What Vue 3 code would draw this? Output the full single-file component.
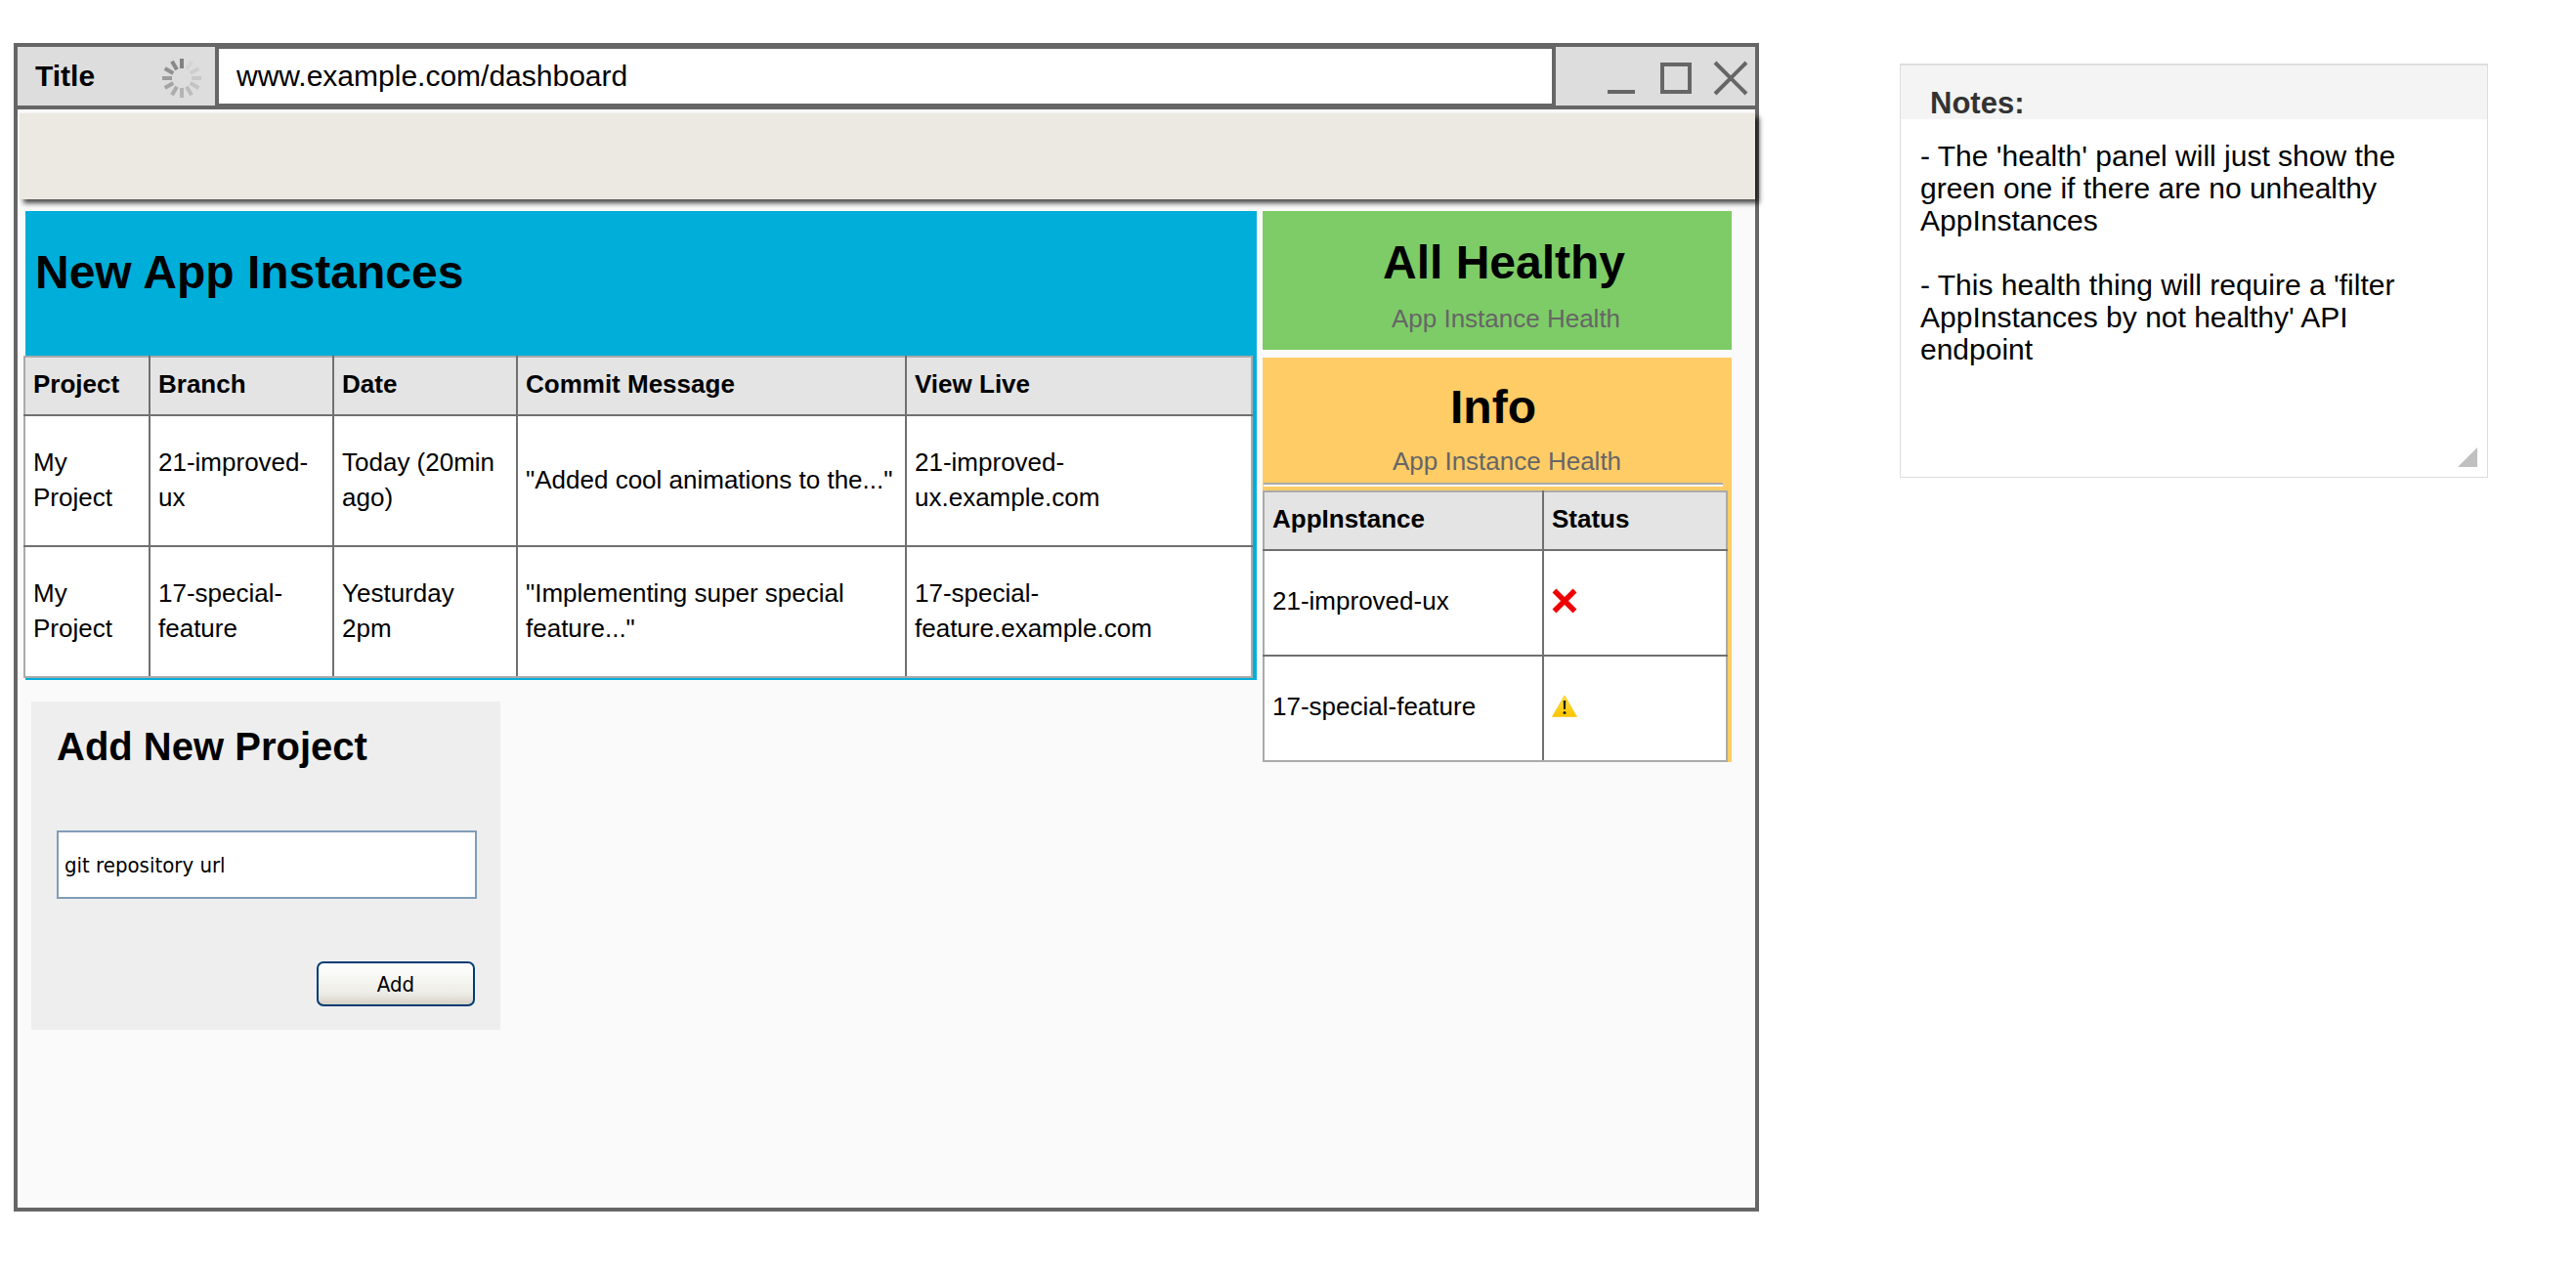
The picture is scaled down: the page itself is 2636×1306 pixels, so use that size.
<script setup>
import { ref } from 'vue'

const address = ref('www.example.com/dashboard')
const repository = ref('git repository url')
const notes = ref(
  "- The 'health' panel will just show the green one if there are no unhealthy AppInstances\n\n- This health thing will require a 'filter AppInstances by not healthy' API endpoint"
)

const builds = [
  { project: 'My Project', branch: '21-improved-ux', date: 'Today (20min ago)', message: '"Added cool animations to the..."', live: '21-improved-ux.example.com' },
  { project: 'My Project', branch: '17-special-feature', date: 'Yesturday 2pm', message: '"Implementing super special feature..."', live: '17-special-feature.example.com' }
]

const health = [
  { name: '21-improved-ux', status: 'error' },
  { name: '17-special-feature', status: 'warning' }
]

const spokes = [0.9, 0.08, 0.14, 0.2, 0.26, 0.32, 0.4, 0.48, 0.56, 0.64, 0.74, 0.84]
</script>

<template>
  <div class="page">
    <main class="window">
      <header class="titlebar">
        <div class="tab">
          <span>Title</span>
          <svg class="spinner" width="40" height="40" viewBox="-20 -20 40 40" aria-hidden="true">
            <rect
              v-for="(o, i) in spokes"
              :key="i"
              x="-2"
              y="-20"
              width="4"
              height="10"
              fill="#777"
              :opacity="o"
              :transform="`rotate(${i * 30})`"
            />
          </svg>
        </div>
        <input v-model="address" class="address" type="text" aria-label="Address" />
        <div class="controls">
          <button type="button" aria-label="Minimize">
            <svg width="36" height="36" viewBox="0 0 36 36"><path d="M4 32h28" /></svg>
          </button>
          <button type="button" aria-label="Maximize">
            <svg width="36" height="36" viewBox="0 0 36 36"><path d="M4 4h28v28H4z" /></svg>
          </button>
          <button type="button" aria-label="Close">
            <svg width="36" height="36" viewBox="0 0 36 36"><path d="M2 2l32 32M34 2L2 34" /></svg>
          </button>
        </div>
      </header>

      <div class="toolbar"></div>

      <div class="content">
        <div class="primary">
          <section class="panel instances">
            <h1>New App Instances</h1>
            <table>
              <colgroup>
                <col class="c-project" />
                <col class="c-branch" />
                <col class="c-date" />
                <col class="c-message" />
                <col />
              </colgroup>
              <thead>
                <tr>
                  <th>Project</th>
                  <th>Branch</th>
                  <th>Date</th>
                  <th>Commit Message</th>
                  <th>View Live</th>
                </tr>
              </thead>
              <tbody>
                <tr v-for="b in builds" :key="b.branch">
                  <td>{{ b.project }}</td>
                  <td>{{ b.branch }}</td>
                  <td>{{ b.date }}</td>
                  <td>{{ b.message }}</td>
                  <td>{{ b.live }}</td>
                </tr>
              </tbody>
            </table>
          </section>

          <form class="add" @submit.prevent>
            <h2><label for="repo">Add New Project</label></h2>
            <input id="repo" v-model="repository" type="text" />
            <button type="submit">Add</button>
          </form>
        </div>

        <aside class="secondary">
          <section class="panel healthy">
            <h1>All Healthy</h1>
            <p>App Instance Health</p>
          </section>

          <section class="panel info">
            <h1>Info</h1>
            <p>App Instance Health</p>
            <hr />
            <table>
              <colgroup>
                <col class="c-instance" />
                <col />
              </colgroup>
              <thead>
                <tr>
                  <th>AppInstance</th>
                  <th>Status</th>
                </tr>
              </thead>
              <tbody>
                <tr v-for="h in health" :key="h.name">
                  <td>{{ h.name }}</td>
                  <td>
                    <svg v-if="h.status === 'error'" width="26" height="26" viewBox="0 0 26 26" role="img" aria-label="Unhealthy">
                      <path d="M2.500 2.500l21 21M23.500 2.500l-21 21" stroke="#ee0000" stroke-width="5.500" />
                    </svg>
                    <svg v-else width="26" height="26" viewBox="0 0 26 26" role="img" aria-label="Warning">
                      <defs>
                        <linearGradient id="amber" x1="0" y1="0" x2="0" y2="1">
                          <stop offset="0" stop-color="#ffdf4a" />
                          <stop offset="1" stop-color="#fcc400" />
                        </linearGradient>
                      </defs>
                      <path d="M13 2L25.500 23.500H.5z" fill="url(#amber)" stroke="#f8cf30" stroke-linejoin="round" />
                      <path d="M11.700 7h2.600l-.4 9h-1.800z" fill="#1c1c10" />
                      <circle cx="13" cy="19.500" r="1.500" fill="#1c1c10" />
                    </svg>
                  </td>
                </tr>
              </tbody>
            </table>
          </section>
        </aside>
      </div>
    </main>

    <section class="notes">
      <label for="notes">Notes:</label>
      <textarea id="notes" v-model="notes" rows="10"></textarea>
      <svg class="grip" width="20" height="20" viewBox="0 0 20 20" aria-hidden="true"><path d="M20 0v20H0z" fill="#c0c0c0" /></svg>
    </section>
  </div>
</template>

<style>
body {
  background: #fff;
}
</style>

<style scoped>
.page {
  display: flex;
  align-items: flex-start;
  gap: 144px;
  padding: 44px 90px 64px 14px;
  font-family: "Liberation Sans", Arial, sans-serif;
  font-size: 26px;
  line-height: 36px;
  color: #000;
}

.page * {
  box-sizing: border-box;
}

h1,
h2,
p {
  margin: 0;
}

h1 {
  font-size: 48px;
  line-height: 56px;
}

button {
  cursor: pointer;
}

/* Browser window */
.window {
  flex: 1;
  min-width: 0;
  border: 4px solid #666;
  background: #fafafa;
}

.titlebar {
  display: flex;
  height: 64px;
  border-bottom: 4px solid #666;
  background: #ddd;
  font-size: 30px;
}

.tab {
  display: flex;
  align-items: center;
  justify-content: space-between;
  width: 202px;
  padding: 0 14px 0 18px;
  font-weight: bold;
}

.spinner {
  margin-top: 4px;
}

.address {
  flex: 1;
  min-width: 0;
  padding: 0 18px;
  border: solid #666;
  border-width: 2px 4px;
  border-radius: 0;
  background: #fff;
  font: inherit;
  color: #000;
  outline: none;
}

.controls {
  display: flex;
  align-items: center;
  justify-content: flex-end;
  gap: 20px;
  width: 204px;
  padding: 4px 7px 0 0;
}

.controls button {
  display: flex;
  padding: 0;
  border: 0;
  background: none;
}

.controls path {
  fill: none;
  stroke: #666;
  stroke-width: 4;
}

.toolbar {
  height: 88px;
  margin: 4px 0 0 2px;
  background: #ece9e2;
  box-shadow: 4px 4px 5px rgba(0, 0, 0, 0.7);
}

.content {
  display: flex;
  align-items: flex-start;
  gap: 6px;
  padding: 12px 24px 182px 8px;
}

.primary {
  flex: 1;
  min-width: 0;
}

.secondary {
  width: 480px;
}

/* Tables */
table {
  table-layout: fixed;
  border-collapse: collapse;
  background: #fff;
}

th,
td {
  padding: 0 8px 2px;
  border: 2px solid #707070;
  text-align: left;
  vertical-align: middle;
}

th {
  height: 60px;
  padding-bottom: 4px;
  border-top-color: #aaa;
  background: #e4e4e4;
}

th:first-child,
td:first-child {
  border-left-color: #aaa;
}

th:last-child,
td:last-child {
  border-right-color: #aaa;
}

tbody tr:last-child td {
  border-bottom-color: #aaa;
}

td svg {
  display: block;
}

/* Panels */
.instances {
  padding-bottom: 2px;
  background: #00aeda;
}

.instances h1 {
  padding: 35px 10px 57px;
}

.instances table {
  width: calc(100% - 2px);
  margin-left: -2px;
}

.instances td {
  height: 134px;
}

.c-project {
  width: 128px;
}

.c-branch,
.c-date {
  width: 188px;
}

.c-message {
  width: 398px;
}

.healthy,
.info {
  text-align: center;
}

.healthy p,
.info p {
  padding-left: 18px;
  color: #666;
}

.healthy {
  margin-bottom: 8px;
  padding: 25px 0 14px;
  background: #7ecc67;
}

.healthy h1 {
  padding-left: 14px;
}

.healthy p {
  margin-top: 11px;
}

.info {
  padding-top: 23px;
  background: #ffcc66;
}

.info h1 {
  padding-right: 8px;
}

.info p {
  margin-top: 9px;
  padding-left: 20px;
}

.info hr {
  height: 4px;
  margin: 4px 9px 4px 1px;
  border: 0;
  border-top: 2px solid #aaa;
  background: #fff;
}

.info table {
  width: calc(100% - 4px);
  margin-bottom: -2px;
}

.info td {
  height: 108px;
  padding-bottom: 4px;
}

.c-instance {
  width: 286px;
}

/* Add project */
.add {
  display: flex;
  flex-direction: column;
  width: 480px;
  margin: 22px 0 0 6px;
  padding: 22px 24px 24px 26px;
  background: #eee;
}

.add h2 {
  font-size: 40px;
  line-height: 48px;
}

.add input,
.add button {
  font-family: "DejaVu Sans Condensed", "DejaVu Sans", sans-serif;
  font-size: 22px;
  color: #000;
}

.add input {
  height: 70px;
  margin: 62px 0 64px;
  padding: 0 6px;
  border: 2px solid #7f9db9;
  background: #fff;
  outline: none;
}

.add button {
  align-self: flex-end;
  width: 162px;
  height: 46px;
  margin-right: 2px;
  padding: 0;
  border: 2px solid #003c74;
  border-radius: 7px;
  background: linear-gradient(#fff, #f3f3ee 50%, #ecebe5 75%, #d6d0c5);
}

/* Notes */
.notes {
  position: relative;
  display: flex;
  flex-direction: column;
  width: 602px;
  margin-top: 21px;
  border: solid #ddd;
  border-width: 2px 1px 1px;
}

.notes label {
  padding: 23px 30px 0;
  background: #f4f4f4;
  font-size: 31px;
  font-weight: bold;
  line-height: 32px;
  color: #333;
}

.notes textarea {
  padding: 21px 60px 15px 20px;
  border: 0;
  background: #fff;
  font: inherit;
  font-size: 30px;
  line-height: 33px;
  color: #000;
  resize: none;
  outline: none;
}

.grip {
  position: absolute;
  right: 10px;
  bottom: 10px;
}
</style>
